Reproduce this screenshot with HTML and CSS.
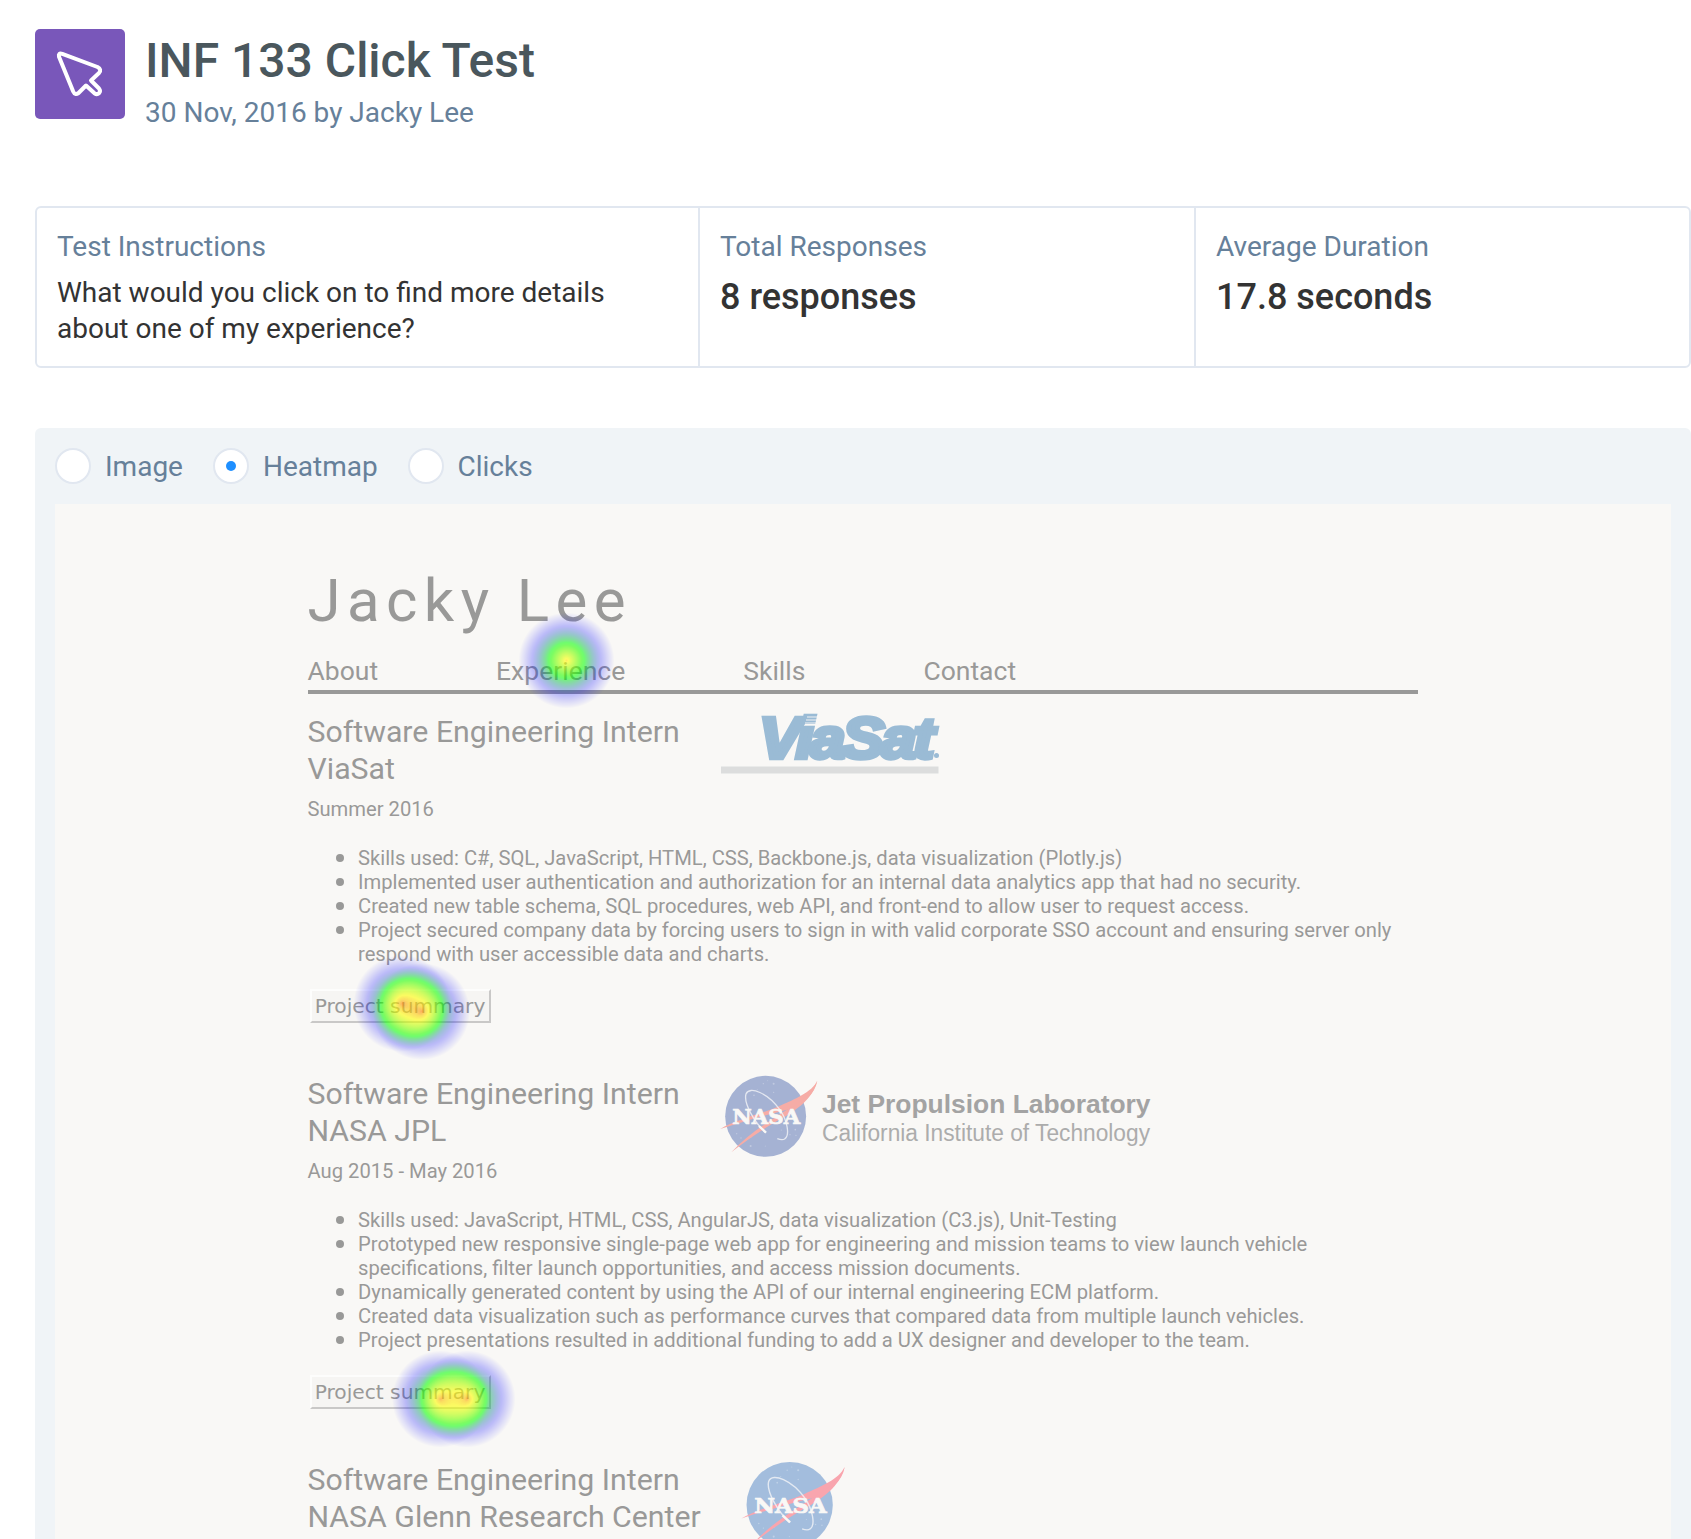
FILE: index.html
```html
<!DOCTYPE html>
<html lang="en">
<head>
<meta charset="utf-8">
<title>INF 133 Click Test</title>
<link rel="stylesheet" href="styles.css">
</head>
<body>
<svg class="defs" width="0" height="0" aria-hidden="true">
  <symbol id="nasa" viewBox="60 45 295 247">
    <circle class="globe" cx="197" cy="169" r="121.500"/>
    <g class="stars">
      <circle cx="190" cy="71" r="2"/><circle cx="221" cy="71" r="3"/><circle cx="203" cy="62" r="1.500"/><circle cx="172" cy="89" r="1.500"/><circle cx="221" cy="97" r="2"/><circle cx="162" cy="106" r="2.500"/>
      <circle cx="110" cy="221" r="2"/><circle cx="123" cy="234" r="2"/><circle cx="152" cy="232" r="2"/><circle cx="152" cy="258" r="3"/><circle cx="196" cy="258" r="1.500"/><circle cx="286" cy="209" r="2.500"/><circle cx="270" cy="224" r="2"/><circle cx="288" cy="226" r="2"/><circle cx="244" cy="210" r="1.500"/>
    </g>
    <path class="swoosh" d="M61 207C110 178 190 160 240 137C285 117 335 97 352 62C345 102 312 131 262 149C190 166 120 188 61 207Z"/>
    <path class="swoosh" d="M94 277C145 222 205 186 250 156C295 129 328 112 352 62C335 121 290 147 257 169C201 199 152 232 94 277Z"/>
    <path class="orbit" d="M198 218C165 190 130 130 138 102C148 76 205 100 240 150C262 182 270 225 255 236C249 241 240 239 232 236"/>
    <path class="orbit-tip" d="M177 198L198 218"/>
    <text class="nasa-word" x="97" y="191" textLength="204" lengthAdjust="spacingAndGlyphs">NASA</text>
  </symbol>
</svg>

<header class="page-header">
  <div class="badge">
    <svg width="90" height="90" viewBox="0 0 90 90"><path d="M27.300 24.900L62.500 38Q67 40.500 64 44L56 51.500L64 59.500Q66 62 64 64.200Q62 66 59.500 64.300L51 56.500L43.500 64Q40 66.500 38.200 62.500L24 27.800Q23 23.500 27.300 24.900Z"/></svg>
  </div>
  <div class="heading">
    <h1>INF 133 Click Test</h1>
    <p>30 Nov, 2016 by Jacky Lee</p>
  </div>
</header>

<section class="stats">
  <div class="stat"><h2>Test Instructions</h2><p class="instructions">What would you click on to find more details<br>about one of my experience?</p></div>
  <div class="stat"><h2>Total Responses</h2><p class="value">8 responses</p></div>
  <div class="stat"><h2>Average Duration</h2><p class="value">17.8 seconds</p></div>
</section>

<main class="viewer">
  <div class="modes">
    <label class="mode mode-image"><i class="radio"></i>Image</label>
    <label class="mode mode-heatmap"><i class="radio checked"></i>Heatmap</label>
    <label class="mode mode-clicks"><i class="radio"></i>Clicks</label>
  </div>
  <div class="preview">
    <div class="resume">
      <h1 class="name">Jacky Lee</h1>
      <nav class="nav"><span>About</span><span>Experience</span><span>Skills</span><span>Contact</span></nav>

      <article class="job">
        <div class="job-head">
          <h2>Software Engineering Intern<br>ViaSat</h2>
          <svg class="logo-viasat" width="260" height="72" viewBox="0 0 260 72">
            <text x="38" y="43.500" textLength="172" lengthAdjust="spacingAndGlyphs">ViaSat</text>
            <circle cx="215.500" cy="41.500" r="2.500"/>
            <path class="streaks" d="M86 3h11M85 6h11M84 9h11"/>
            <rect x="0" y="52.500" width="217.500" height="7"/>
          </svg>
        </div>
        <p class="date">Summer 2016</p>
        <ul>
          <li>Skills used: C#, SQL, JavaScript, HTML, CSS, Backbone.js, data visualization (Plotly.js)</li>
          <li>Implemented user authentication and authorization for an internal data analytics app that had no security.</li>
          <li>Created new table schema, SQL procedures, web API, and front-end to allow user to request access.</li>
          <li>Project secured company data by forcing users to sign in with valid corporate SSO account and ensuring server only<br>respond with user accessible data and charts.</li>
        </ul>
        <button class="summary">Project summary</button>
      </article>

      <article class="job">
        <div class="job-head">
          <h2>Software Engineering Intern<br>NASA JPL</h2>
          <div class="logo-jpl">
            <svg class="nasa" width="98.300" height="82.300"><use href="#nasa"/></svg>
            <svg class="jpl-text" width="350" height="64" viewBox="0 0 350 64">
              <text class="jpl-name" x="0" y="22" textLength="328.500" lengthAdjust="spacingAndGlyphs">Jet Propulsion Laboratory</text>
              <text class="jpl-sub" x="0" y="50" textLength="328" lengthAdjust="spacingAndGlyphs">California Institute of Technology</text>
            </svg>
          </div>
        </div>
        <p class="date">Aug 2015 - May 2016</p>
        <ul>
          <li>Skills used: JavaScript, HTML, CSS, AngularJS, data visualization (C3.js), Unit-Testing</li>
          <li>Prototyped new responsive single-page web app for engineering and mission teams to view launch vehicle<br>specifications, filter launch opportunities, and access mission documents.</li>
          <li>Dynamically generated content by using the API of our internal engineering ECM platform.</li>
          <li>Created data visualization such as performance curves that compared data from multiple launch vehicles.</li>
          <li>Project presentations resulted in additional funding to add a UX designer and developer to the team.</li>
        </ul>
        <button class="summary">Project summary</button>
      </article>

      <article class="job">
        <div class="job-head">
          <h2>Software Engineering Intern<br>NASA Glenn Research Center</h2>
          <svg class="nasa glenn" width="104.800" height="87.700"><use href="#nasa"/></svg>
        </div>
      </article>
    </div>

    <svg class="heatmap" width="1616" height="1035" viewBox="0 0 1616 1035">
      <defs>
        <radialGradient id="spot">
          <stop offset="0" stop-color="#000" stop-opacity=".88"/>
          <stop offset="1" stop-color="#000" stop-opacity="0"/>
        </radialGradient>
        <filter id="palette" filterUnits="userSpaceOnUse" x="0" y="0" width="1616" height="1035" color-interpolation-filters="sRGB">
          <feColorMatrix values="0 0 0 1 0  0 0 0 1 0  0 0 0 1 0  0 0 0 1 0"/>
          <feComponentTransfer>
            <feFuncR type="table" tableValues="0 0 0 0 0 0 0 0 0 0 0 0 .17 .33 .5 .67 .83 1 1 1 1"/>
            <feFuncG type="table" tableValues="0 0 0 0 0 0 .17 .33 .5 .67 .83 1 1 1 1 1 1 1 .8 .45 0"/>
            <feFuncB type="table" tableValues="1 1 1 1 1 1 .83 .67 .5 .33 .17 0 0 0 0 0 0 0 0 0 0"/>
            <feFuncA type="table" tableValues="0 .05 .1 .15 .2 .25 .3 .35 .4 .45 .5 .55 .6 .6 .6 .6 .6 .6 .6 .6 .6"/>
          </feComponentTransfer>
        </filter>
      </defs>
      <g filter="url(#palette)" fill="url(#spot)">
        <circle cx="511.500" cy="156.500" r="48"/>
        <circle cx="347" cy="499.500" r="48.500"/><circle cx="366.500" cy="507.500" r="48.500"/>
        <circle cx="385.500" cy="895" r="48.500"/><circle cx="412" cy="895" r="48.500"/>
      </g>
    </svg>
  </div>
</main>
</body>
</html>
```
FILE: styles.css
```css
* { box-sizing: border-box; margin: 0; padding: 0; }
body {
  width: 1691px; height: 1539px; overflow: hidden;
  padding: 29px 0 0 35px;
  display: flex; flex-direction: column;
  background: #fff; color: #333;
  font-family: Roboto, "Liberation Sans", sans-serif;
  font-size: 28px; white-space: nowrap;
}
h1, h2 { font-weight: 400; }
.defs { display: none; }

.page-header { flex: none; display: flex; gap: 20px; height: 177px; }
.badge { width: 90px; height: 90px; border-radius: 5px; background: #7957ba; }
.badge svg { display: block; }
.badge path { fill: none; stroke: #fff; stroke-width: 4; stroke-linejoin: round; }
.heading h1 { font-size: 48px; line-height: 60px; font-weight: 500; color: #4a575d; padding-top: 2px; }
.heading p { line-height: 40px; color: #66809a; margin-top: 2px; }

.stats {
  flex: none;
  display: grid; grid-template-columns: 661px 496px 1fr;
  height: 162px; border: 2px solid #e1e7f0; border-radius: 6px;
}
.stat { padding: 19px 20px 0; border-left: 2px solid #e1e7f0; }
.stat:first-child { border-left: 0; }
.stat h2 { font-size: 28px; line-height: 40px; color: #66809a; }
.instructions { line-height: 36px; margin-top: 8px; }
.value { font-size: 36px; line-height: 44px; font-weight: 500; margin-top: 8px; }

.viewer {
  flex: 1; min-height: 0; margin-top: 60px; padding: 0 20px;
  background: #f0f4f7; border-radius: 6px 6px 0 0;
  display: flex; flex-direction: column;
}
.modes { flex: none; display: flex; height: 76px; align-items: center; color: #66809a; }
.mode { display: flex; align-items: center; gap: 14px; }
.mode-image { width: 158px; }
.mode-heatmap { width: 195px; }
.mode-clicks { gap: 13.500px; }
.radio {
  width: 36px; height: 36px; border-radius: 50%;
  border: 2px solid #e1e7f0; background: #fff;
  display: grid; place-items: center;
}
.checked::after { content: ""; width: 10px; height: 10px; border-radius: 50%; background: #1e8fff; }

.preview { position: relative; flex: 1; min-height: 0; overflow: hidden; background: #f9f8f6; color: #999998; }
.resume { width: 1363px; padding: 62px 0 0 252.500px; }
.name { font-size: 60px; line-height: 70px; letter-spacing: 6.400px; }
.nav {
  display: flex; gap: 118px; margin-top: 20px; padding-bottom: 3.500px;
  border-bottom: 4px solid #999998; font-size: 26.500px; line-height: 30px;
}
.job { margin-bottom: 53.300px; }
.nav + .job { margin-top: 20.700px; }
.job-head { display: grid; grid-template-columns: 413.500px 1fr; height: 73.400px; }
.job-head h2 { font-size: 30.270px; line-height: 36.600px; }
.date { margin-top: 9.600px; font-size: 20.200px; line-height: 24px; }
.job ul { margin-top: 25px; padding-left: 50.500px; list-style: none; font-size: 20.200px; line-height: 24px; }
.job li { position: relative; }
.job li::before {
  content: ""; position: absolute; left: -22.500px; top: 8px;
  width: 8px; height: 8px; border-radius: 50%; background: #999998;
}
.summary {
  display: block; width: 181px; height: 34px; margin: 22.600px 0 0 2px;
  border: 2px solid; border-color: #fdfdfc #c9c8c7 #c9c8c7 #fdfdfc;
  background: #f6f5f3; color: #999998; text-align: center;
  font: 20.200px/28px "DejaVu Sans", sans-serif;
}
.summary + * { margin-top: 0; }

.logo-viasat, .jpl-text { overflow: visible; }
.logo-viasat { fill: #9abbd5; }
.logo-viasat text { font: italic 700 58px "Liberation Sans", sans-serif; letter-spacing: -3px; stroke: #9abbd5; stroke-width: 4.500; }
.logo-viasat rect { fill: #dcdddd; }
.streaks { stroke: #f9f8f6; stroke-width: 1.500; opacity: .6; }
.logo-jpl { display: flex; align-items: flex-start; }
.logo-jpl svg { flex: none; }
.logo-jpl .jpl-text { margin: 15px 0 0 3.500px; }
.jpl-name { font: 700 26.500px "Liberation Sans", sans-serif; fill: #a3a3a3; }
.jpl-sub { font: 400 23.500px "Liberation Sans", sans-serif; fill: #acacac; }
.nasa { --globe: #a5b2d3; --swoosh: #f6aca6; margin: -1.500px 0 0 -1px; }
.glenn { --globe: #a3bddd; --swoosh: #f9a5ae; margin: -.5px 0 0 20px; }
.globe { fill: var(--globe); }
.swoosh { fill: var(--swoosh); }
.stars { fill: #fff; opacity: .3; }
.orbit { fill: none; stroke: #f3f4f8; stroke-width: 4; opacity: .8; }
.orbit-tip { stroke: #f9f8f6; stroke-width: 7; }
.nasa-word { font: 700 59px "DejaVu Serif", serif; fill: #f9f8f6; stroke: #f9f8f6; stroke-width: 2; }

.heatmap { position: absolute; left: 0; top: 0; }
```
